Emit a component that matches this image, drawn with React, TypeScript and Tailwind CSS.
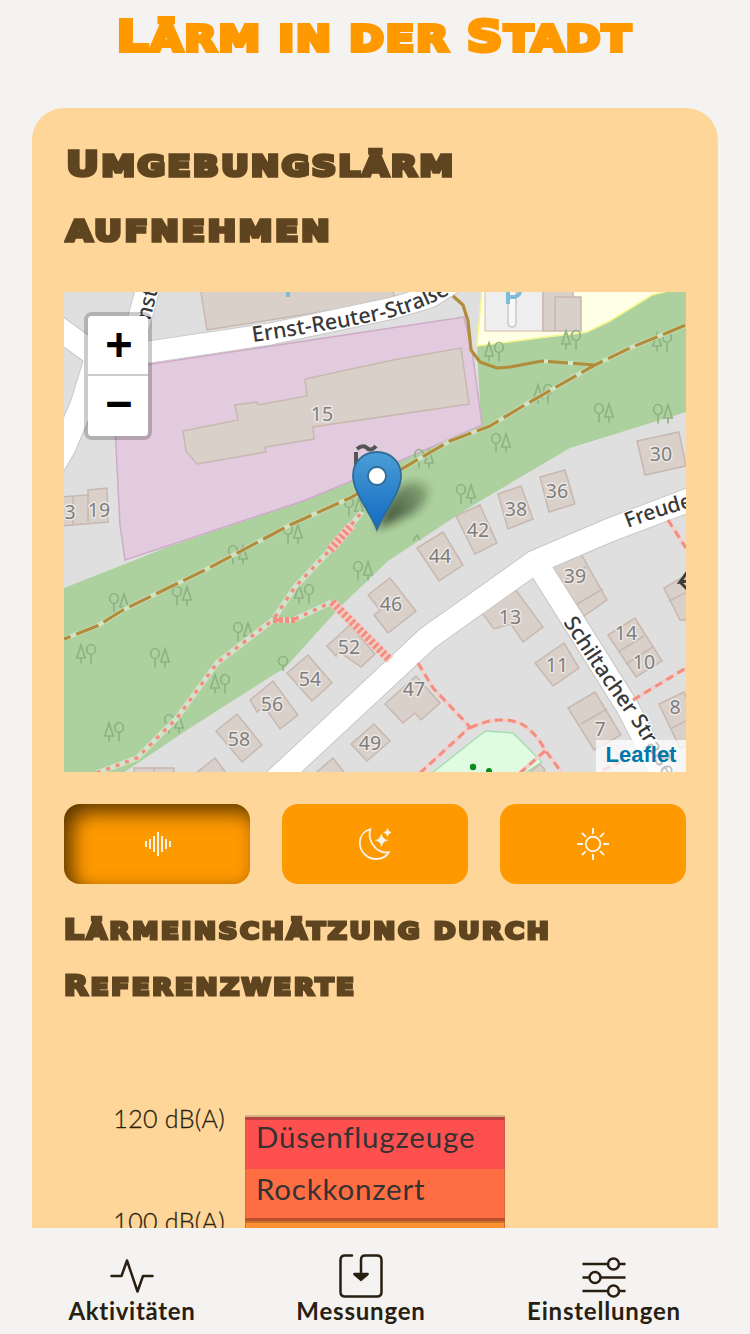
import type { ReactNode } from "react";

const TITLE = "font-['DejaVu_Sans',sans-serif] font-bold whitespace-nowrap [paint-order:stroke]";

/* Lowercase run of a display heading, drawn as reduced capitals. */
function Low({ children }: { children: ReactNode }) {
  return <span className="text-[0.84em] uppercase">{children}</span>;
}

const houses: string[] = [
  "200,286 207,330 396,300 391,286",
  "183,431 238,420 235,405 257,402 258,405 307,396 305,379 393,360 461,348 469,404 313,427 314,439 265,447 266,452 197,464 186,451",
  "60,497 74,496 88,495 88,490 107,488 108,522 60,526",
  "637,441 679,432 686,466 645,475",
  "540,477 565,470 575,504 549,512",
  "498,494 521,486 533,519 508,529",
  "456,516 480,505 497,543 475,554",
  "417,548 443,532 463,565 439,581",
  "368,595 390,578 416,611 388,633 374,615 380,610",
  "327,646 350,625 375,654 361,667 338,651 336,656",
  "287,673 308,655 332,683 312,701",
  "250,700 273,681 298,715 280,729 264,706 257,712",
  "216,731 237,714 262,745 242,762",
  "351,744 374,724 390,741 367,761",
  "385,704 416,676 440,703 421,720 415,713 403,723",
  "482,613 515,589 543,627 523,642 511,624 494,629",
  "551,567 581,554 607,600 584,616",
  "535,663 564,643 579,668 553,686",
  "568,708 595,692 621,735 594,750",
  "608,635 635,618 662,661 636,677",
  "664,588 690,573 700,620 680,620",
  "659,704 684,692 705,740 680,748",
  "134,768 174,768 174,790 134,790",
  "190,778 215,758 230,778",
  "310,778 333,758 350,780",
  "525,776 540,764 545,770 540,776",
  "543,286 573,286 573,297 581,297 581,331 543,331",
];

const walls =
  "M73 497v27M88 495v27M560 583l26-16M577 604l26-15M581 724l26-15M618 652l26-16M626 664l27-17M669 601l20-10M672 728l14-7M154 768v8M555 331v-34h18";

const numbers: [string, number, number][] = [
  ["15", 322, 421], ["30", 661, 461], ["36", 557, 498], ["38", 516, 516], ["42", 478, 537], ["44", 440, 563],
  ["46", 391, 611], ["52", 349, 654], ["54", 310, 686], ["56", 272, 711], ["58", 239, 746], ["49", 370, 750],
  ["47", 414, 696], ["13", 510, 624], ["39", 575, 583], ["11", 557, 672], ["7", 600, 736], ["14", 626, 640],
  ["10", 644, 669], ["8", 675, 714], ["3", 70, 519], ["19", 99, 517],
];

/* x, y, and whether the conifer stands on the left */
const trees: [number, number, boolean][] = [
  [119, 603, false], [182, 596, false], [238, 555, false], [243, 632, false], [86, 654, true], [160, 658, false],
  [220, 684, true], [114, 732, true], [174, 724, false], [293, 534, false], [304, 594, true], [363, 571, false],
  [354, 507, false], [424, 459, false], [466, 494, false], [501, 443, false], [604, 413, false], [663, 414, false],
  [494, 352, true], [571, 340, true], [662, 342, true], [543, 394, true],
];

function Tree({ x, y, flip }: { x: number; y: number; flip: boolean }) {
  const s = flip ? -1 : 1;
  return (
    <g transform={`translate(${x} ${y}) scale(${s} 1)`}>
      <ellipse cx="-5" cy="-4.500" rx="4.300" ry="5" />
      <path d="M-5 .5V9.500M5-9L.8 4h8.400ZM5 4v5.500" />
    </g>
  );
}

function MapDrawing() {
  return (
    <svg viewBox="64 292 622 480" className="block h-full w-full" aria-hidden="true">
      <defs>
        <linearGradient id="pin" x1="0" y1="0" x2="0" y2="1">
          <stop offset="0" stopColor="#4b9ed4" />
          <stop offset="0.8" stopColor="#1d74c8" />
          <stop offset="1" stopColor="#126fc6" />
        </linearGradient>
        <linearGradient id="shade" gradientUnits="userSpaceOnUse" x1="377" y1="525" x2="428" y2="480">
          <stop offset="0" stopColor="#16240f" stopOpacity="1" />
          <stop offset="1" stopColor="#16240f" stopOpacity="0.250" />
        </linearGradient>
        <filter id="soft" x="-60%" y="-60%" width="220%" height="220%">
          <feGaussianBlur stdDeviation="5" />
        </filter>
        <path id="ernst" d="M253 342Q340 329 385 319Q425 310 475 280" />
        <path id="freud" d="M628 528Q660 515 720 500" />
        <path id="schil" d="M563 622Q592 668 620 706T672 795" />
      </defs>
      <rect x="64" y="292" width="622" height="480" fill="#dfdfdf" />
      <path
        d="M64 588L125 564 170 546 300 502 400 461 481 425 477 346 587 333 657 292H686V412L570 448 470 507 388 561 340 607 285 668 270 677 187 730 123 773H64Z"
        fill="#add19e"
      />
      <path d="M482 290L477 346 553 336 587 332 610 321 652 295 672 290Z" fill="#ffffe5" stroke="#f7f78c" strokeWidth="1.500" />
      <path d="M485 290H543V331H485Z" fill="#eee" stroke="#d6b9b5" />
      <path d="M508 290V322Q508 327 512 327Q516 327 516 322V290" fill="#f7f7f7" stroke="#c9c9c9" strokeWidth="1.500" />
      <path d="M112 370L464 317 472 350 482 425 395 463 303 501 125 560 120 525Z" fill="#e2cbde" stroke="#cfabc8" strokeWidth="1.500" />
      <path d="M432 773L480 735 486 731 513 733 542 762 525 773Z" fill="#dffce2" stroke="#a5dfb0" strokeWidth="1.500" />

      <g fill="#d9d0c9" stroke="#c8b8af" strokeWidth="1.500">
        {houses.map((p) => (
          <polygon key={p} points={p} />
        ))}
        <path d={walls} fill="none" />
      </g>

      <g fill="none" stroke="#c8c8c8" strokeLinejoin="round">
        <g strokeWidth="25">
          <path d="M250 803L282 774 428 638 535 562 610 530 710 492" />
          <path d="M540 568L628 708 670 790" strokeWidth="24" />
          <path d="M90 361L149 352 270 334 393 308 430 297 460 278" strokeWidth="23" />
          <path d="M150 280L138 325 96 360 82 405 64 447 45 480" />
          <path d="M40 315L105 362" />
        </g>
        <g stroke="#fff" strokeWidth="23">
          <path d="M250 803L282 774 428 638 535 562 610 530 710 492" />
          <path d="M540 568L628 708 670 790" strokeWidth="22" />
          <path d="M90 361L149 352 270 334 393 308 430 297 460 278" strokeWidth="21" />
          <path d="M150 280L138 325 96 360 82 405 64 447 45 480" />
          <path d="M40 315L105 362" />
        </g>
      </g>

      <g fill="none" stroke="#8fb283" strokeWidth="1.700">
        {trees.map(([x, y, flip]) => (
          <Tree key={`${x}-${y}`} x={x} y={y} flip={flip} />
        ))}
        <circle cx="283" cy="661" r="4.500" />
        <path d="M283 665v6M413 541l4-6 3 5" />
      </g>

      <g fill="none" strokeLinejoin="round">
        <path d="M64 639L97 626 123 610 207 569 290 525 350 498 400 470 450 441 490 426 523 406 593 366 630 348 686 325" stroke="#cfe2c2" strokeWidth="4.500" />
        <path d="M64 639L97 626 123 610 207 569 290 525 350 498 400 470 450 441 490 426 523 406 593 366 630 348 686 325" stroke="#b18c3a" strokeWidth="3.200" strokeDasharray="24 6" strokeDashoffset="17" />
        <path d="M453 296L463 305 468 321 471 350 480 362 497 368 510 367 542 361 595 365" stroke="#b18c3a" strokeWidth="3.200" />
        <path d="M544 361.300h4M568 363h5" stroke="#d5e6c9" strokeWidth="4" />
        <path d="M97 773L137 758 177 718 217 663 243 643 273 620H293L332 602M275 617L295 587 330 550 362 512" stroke="#d3e2ca" strokeWidth="5.500" />
        <g stroke="#f58e80">
          <path d="M97 773L137 758 177 718 217 663 243 643 273 620H293L332 602M275 617L295 587 330 550 362 512" strokeWidth="3.500" strokeDasharray="4 6" />
          <path d="M332 602L390 660M330 550L352 525" strokeWidth="9" stroke="#f0cfc7" />
          <path d="M332 602L390 660M330 550L352 525" strokeWidth="8" strokeDasharray="3 2.500" />
          <path d="M273 620H295" strokeWidth="6" strokeDasharray="4 2" />
          <path
            d="M418 663L433 688 470 727 420 773M470 728Q496 715 520 723Q535 731 545 750L562 773M545 751L520 773M668 520L686 548M633 700L686 668M603 770L620 762"
            stroke="#eed1cc"
            strokeWidth="4"
          />
          <path
            d="M418 663L433 688 470 727 420 773M470 728Q496 715 520 723Q535 731 545 750L562 773M545 751L520 773M668 520L686 548M633 700L686 668M603 770L620 762"
            strokeWidth="3"
            strokeDasharray="8 5"
          />
        </g>
      </g>
      <circle cx="473" cy="767" r="3.200" fill="#0d8c1e" />
      <circle cx="489" cy="771" r="3" fill="#0d8c1e" />

      <g className="font-['Noto_Sans',sans-serif]" paintOrder="stroke" strokeLinejoin="round">
        <g fontSize="19.500" textAnchor="middle" fill="#7e7e7e" stroke="#ebe7e4" strokeWidth="3">
          {numbers.map(([n, x, y]) => (
            <text key={n} x={x} y={y}>
              {n}
            </text>
          ))}
        </g>
        <g fontWeight="500" fill="#383838" stroke="#fff" strokeWidth="2.500">
          <text fontSize="21.500" textLength="204">
            <textPath href="#ernst">Ernst-Reuter-Straße</textPath>
          </text>
          <text fontSize="21" letterSpacing="-0.200">
            <textPath href="#freud">Freudenstädter</textPath>
          </text>
          <text fontSize="21.500">
            <textPath href="#schil">Schiltacher Straße</textPath>
          </text>
          <text fontSize="21" transform="translate(150 321) rotate(-76)">nst</text>
        </g>
      </g>
      <path d="M508 290V304M509 297h6q5-2 5-6M288 290v7" fill="none" stroke="#7fbcda" strokeWidth="4" />
      <path d="M688 571L680 582 688 581M680 582L688 590" fill="none" stroke="#3c3c3c" strokeWidth="3" />
      <path d="M357 449q6-5 10-1t9-2M356 452V468" fill="none" stroke="#555" strokeWidth="4" />

      <path d="M377 529L388 502Q402 476 424 484Q436 496 412 514Z" fill="url(#shade)" opacity="0.800" filter="url(#soft)" />
      <path
        d="M377 529.500C371 513 353 493 353 475.500C353 462 363.500 452 377 452S401 462 401 475.500C401 493 383 513 377 529.500Z"
        fill="url(#pin)"
        stroke="#2e6c97"
        strokeWidth="1.800"
      />
      <circle cx="377" cy="476" r="9" fill="#fff" stroke="#2e6c97" strokeWidth="1.800" />
    </svg>
  );
}

function MapView() {
  return (
    <div className="relative h-[480px] w-[622px] overflow-hidden">
      <MapDrawing />
      <div className="absolute top-5 left-5 flex w-[68px] flex-col rounded-lg border-4 border-black/20 bg-clip-padding font-['DejaVu_Sans_Mono',monospace] text-[44px] font-bold text-black">
        <button className="flex h-[60px] items-center justify-center rounded-t border-b-2 border-[#ccc] bg-white pb-0.5 pl-0.5 leading-none">+</button>
        <button className="flex h-[60px] items-center justify-center rounded-b bg-white pb-1.5 pl-0.5 leading-none">−</button>
      </div>
      <a className="absolute right-0 bottom-0 flex h-8 w-[90px] items-center justify-center bg-white/70 pb-1 font-['Liberation_Sans',sans-serif] text-[22px] font-bold text-[#0078a8]">
        Leaflet
      </a>
    </div>
  );
}

function WaveIcon() {
  return (
    <svg viewBox="0 0 32 32" className="size-8" fill="none" stroke="#f9f3ea" strokeWidth="2">
      <path d="M5 13v6M9 11v10M13 8v16M17 4v24M21 8v16M25 11v10M29 13v6" />
    </svg>
  );
}

function MoonIcon() {
  return (
    <svg viewBox="0 0 32 32" className="size-8" fill="none" stroke="#f9f3ea" strokeWidth="1.800" strokeLinejoin="round">
      <path d="M11.500 1C4 3.500 0 9.500 1 17C2 25 9 31 17 31C22.500 31 27.500 28.500 30 24C26 25 20 24 16 19.500C11 14.500 9.500 7 11.500 1Z" />
      <path d="M22.500 6Q23.500 11.300 28.800 12.300Q23.500 13.300 22.500 18.600Q21.500 13.300 16.200 12.300Q21.500 11.300 22.500 6ZM28.500 .5Q29.100 3.900 32.500 4.500Q29.100 5.100 28.500 8.500Q27.900 5.100 24.500 4.500Q27.900 3.900 28.500 .5Z" fill="#f9f3ea" stroke="#f9f3ea" strokeWidth=".5" />
    </svg>
  );
}

function SunIcon() {
  return (
    <svg viewBox="0 0 32 32" className="size-8" fill="none" stroke="#f9f3ea" strokeWidth="1.900">
      <circle cx="16" cy="16" r="7.300" />
      <path d="M16 0v6M16 26v6M0 16h6M26 16h6M5 5l3.800 3.800M23.200 23.200L27 27M5 27l3.800-3.800M23.200 8.800L27 5" />
    </svg>
  );
}

function ActivityIcon() {
  return (
    <svg viewBox="0 0 44 44" className="h-11 w-11" fill="none" stroke="#291f10" strokeWidth="2.500" strokeLinecap="round" strokeLinejoin="round">
      <path d="M1.500 22H11.500L17 6.500L27.500 37.500L33 22H42.500" />
    </svg>
  );
}

function SaveIcon() {
  return (
    <svg viewBox="0 0 44 44" className="h-11 w-11" fill="none" stroke="#291f10" strokeWidth="2.500" strokeLinecap="round" strokeLinejoin="round">
      <path d="M13 1.500H6Q1.500 1.500 1.500 6V38Q1.500 42.500 6 42.500H38Q42.500 42.500 42.500 38V6Q42.500 1.500 38 1.500H26Q22 1.500 22 6V21" />
      <path d="M15 19.500H29Q29.500 20 28.500 21L22 26.500L15.500 21Q14.500 20 15 19.500Z" fill="#291f10" strokeWidth="1.500" />
    </svg>
  );
}

function SlidersIcon() {
  return (
    <svg viewBox="0 0 44 44" className="h-11 w-11" fill="none" stroke="#291f10" strokeWidth="2.500">
      <path d="M.5 10H25.500M37.500 10H43.500M.5 23.500H7M19 23.500H43.500M.5 37H25.500M37.500 37H43.500" />
      <circle cx="31.500" cy="10" r="5.500" />
      <circle cx="13" cy="23.500" r="5.500" />
      <circle cx="31.500" cy="37" r="5.500" />
    </svg>
  );
}

function NavItem({ icon, label, className }: { icon: ReactNode; label: string; className: string }) {
  return (
    <a className={`flex flex-col items-center ${className}`}>
      {icon}
      <span className="h-7 text-2xl leading-[26px] font-bold whitespace-nowrap [font-feature-settings:'liga'_0]">{label}</span>
    </a>
  );
}

export default function App() {
  return (
    <div className="flex h-[1334px] w-[750px] flex-col overflow-hidden bg-[#f4f3f1] font-['Lato',sans-serif] text-[#291f10]">
      <div className="flex min-h-0 flex-1 flex-col overflow-hidden">
        <header className="flex h-[108px] shrink-0 justify-center">
          <h1 className={`${TITLE} h-[72px] scale-x-[1.18] text-[42px] leading-[74px] tracking-[1.7px] text-[#ff9900] [-webkit-text-stroke:4px_#ff9900]`}>
            L<Low>ärm in der </Low>S<Low>tadt</Low>
          </h1>
        </header>
        <main className="mx-8 flex-1 overflow-hidden rounded-t-[32px] bg-[#ffd699] px-8 pt-6">
          <h2 className={`${TITLE} h-40 w-max origin-left scale-x-[1.18] pl-0.5 text-[34px] leading-[65px] text-[#5e4520] [-webkit-text-stroke:3.6px_#5e4520]`}>
            <span className="block h-[65px] tracking-[2.1px]">U<Low>mgebungslärm</Low></span>
            <span className="block h-[65px] tracking-[2.5px]"><Low>aufnehmen</Low></span>
          </h2>
          <MapView />
          <div className="mt-8 grid h-20 grid-cols-3 gap-8">
            <button className="flex items-center justify-center rounded-2xl bg-[#ff9900] shadow-[inset_8px_8px_20px_rgba(0,0,0,0.65)]">
              <WaveIcon />
            </button>
            <button className="flex items-center justify-center rounded-2xl bg-[#ff9900]">
              <MoonIcon />
            </button>
            <button className="flex items-center justify-center rounded-2xl bg-[#ff9900]">
              <SunIcon />
            </button>
          </div>
          <h3 className={`${TITLE} mt-[18px] h-[112px] w-max origin-left scale-x-[1.18] text-[26.5px] leading-[56px] tracking-[2.2px] text-[#5e4520] [-webkit-text-stroke:2.8px_#5e4520]`}>
            <span className="block h-14">L<Low>ärmeinschätzung durch</Low></span>
            <span className="block h-14">R<Low>eferenzwerte</Low></span>
          </h3>
          <div className="mt-[89px] flex">
            <div className="flex w-[161px] flex-col text-right text-[25px] font-light tracking-[0.3px] [-webkit-text-stroke:0.3px_#291f10] [font-feature-settings:'liga'_0]">
              <span className="h-[103px] leading-[30px]">120 dB(A)</span>
              <span className="h-[103px] leading-[30px]">100 dB(A)</span>
            </div>
            <div className="mt-[12px] ml-5 w-[260px] text-[29.5px] tracking-[0.8px] text-[#333] [font-feature-settings:'liga'_0]">
              <div className="h-0.5 bg-[#d4b37f]" />
              <div className="h-[52px] border-x border-t-[3px] border-x-[#c85a4d] border-t-[#bb4444] bg-[#ff5050] pl-2.5 leading-[34px]">Düsenflugzeuge</div>
              <div className="h-[49px] border-x border-x-[#cd6a45] bg-[#ff6e42] pl-2.5 leading-[40px]">Rockkonzert</div>
              <div className="h-[3px] bg-[#b9502f]" />
              <div className="h-[2px] bg-[#c77328]" />
              <div className="h-12 border-x border-[#cd6a45] bg-[#ff9133]" />
            </div>
          </div>
        </main>
      </div>
      <nav className="flex h-[106px] shrink-0 pt-[26px]">
        <NavItem icon={<ActivityIcon />} label="Aktivitäten" className="ml-[62px] w-[140px] tracking-[0.7px]" />
        <NavItem icon={<SaveIcon />} label="Messungen" className="ml-[89px] w-[140px] tracking-[0.8px]" />
        <NavItem icon={<SlidersIcon />} label="Einstellungen" className="ml-[93px] w-[160px] tracking-[0.8px]" />
      </nav>
    </div>
  );
}
